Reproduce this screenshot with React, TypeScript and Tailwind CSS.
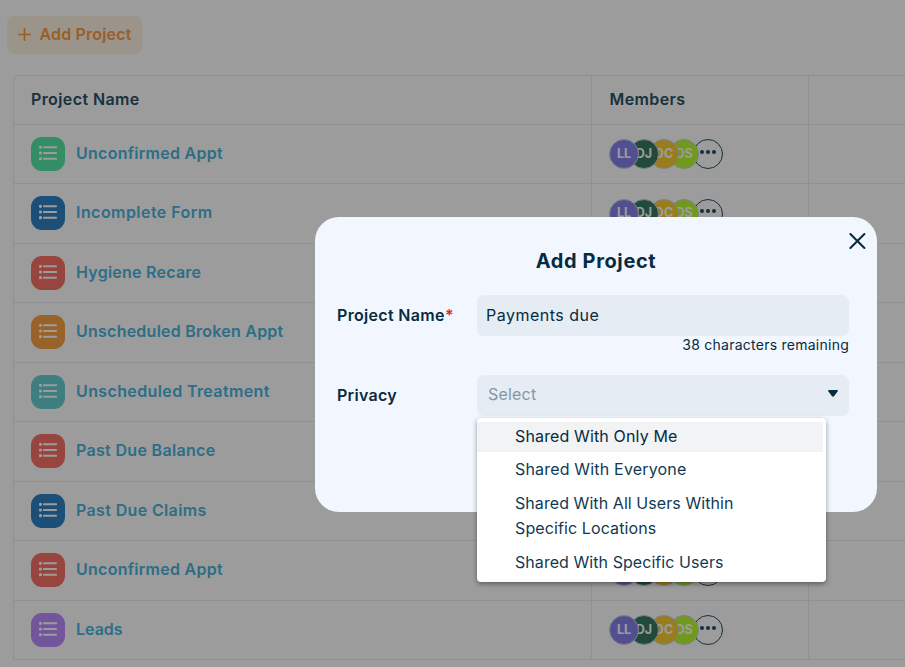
import { Fragment } from 'react';

type Project = { name: string; color: string; tracking: string };

const projects: Project[] = [
  { name: 'Unconfirmed Appt', color: 'bg-[#55e6a6]', tracking: 'tracking-[0.27px]' },
  { name: 'Incomplete Form', color: 'bg-[#2f81c5]', tracking: 'tracking-[0.45px]' },
  { name: 'Hygiene Recare', color: 'bg-[#fb7168]', tracking: 'tracking-[0.24px]' },
  { name: 'Unscheduled Broken Appt', color: 'bg-[#f8a044]', tracking: 'tracking-[0.24px]' },
  { name: 'Unscheduled Treatment', color: 'bg-[#68cfd1]', tracking: 'tracking-[0.38px]' },
  { name: 'Past Due Balance', color: 'bg-[#fb7168]', tracking: 'tracking-[0.32px]' },
  { name: 'Past Due Claims', color: 'bg-[#2f81c5]', tracking: 'tracking-[0.36px]' },
  { name: 'Unconfirmed Appt', color: 'bg-[#fb7168]', tracking: 'tracking-[0.27px]' },
  { name: 'Leads', color: 'bg-[#bd8bff]', tracking: 'tracking-[0px]' },
];

const members = [
  { initials: 'LL', style: 'z-40 bg-[#8782ee]' },
  { initials: 'DJ', style: 'z-30 bg-[#377a60]' },
  { initials: 'DC', style: 'z-20 bg-[#f8cb30]' },
  { initials: 'DS', style: 'z-10 bg-[#b8fa30]' },
];

function ListIcon() {
  return (
    <svg width="18" height="16" viewBox="0 0 18 16" fill="#fff" className="-mt-[2px]">
      {[2.3, 8, 13.7].map((y) => (
        <Fragment key={y}>
          <circle cx="1.5" cy={y} r="1.6" />
          <rect x="4" y={y - 1.05} width="14" height="2.1" rx="0.8" />
        </Fragment>
      ))}
    </svg>
  );
}

function Members() {
  return (
    <div className="isolate flex items-center">
      {members.map((m) => (
        <span
          key={m.initials}
          className={`relative -mr-[10px] flex size-[30px] items-center justify-center rounded-full border border-[#d0d2e0] text-[12.5px] font-bold text-white ${m.style}`}
        >
          {m.initials}
        </span>
      ))}
      <span className="ml-[4px] flex size-[30px] items-center justify-center gap-[2px] rounded-full border border-[#264c64] pb-[5px]">
        <i className="size-[4px] rounded-full bg-[#264c64]" />
        <i className="size-[4px] rounded-full bg-[#264c64]" />
        <i className="size-[4px] rounded-full bg-[#264c64]" />
      </span>
    </div>
  );
}

function ProjectTable() {
  return (
    <div className="ml-[13px] mt-[21px] w-[920px] rounded-tl-[6px] border-l border-t border-[#e8ebf3]">
      <div className="grid h-[48.600px] grid-cols-[578px_217px_1fr] border-b border-[#e8ebf3] font-semibold text-[#2b5066]">
        <div className="flex items-center border-r border-[#e8ebf3] pb-[1px] pl-[17px] tracking-[0.4px]">Project Name</div>
        <div className="flex items-center border-r border-[#e8ebf3] pb-[1px] pl-[17.500px] tracking-[0.38px]">Members</div>
        <div />
      </div>
      {projects.map((p, i) => (
        <div key={i} className="grid h-[59.5px] grid-cols-[578px_217px_1fr] border-b border-[#e8ebf3]">
          <div className="flex items-center gap-[11px] border-r border-[#e8ebf3] pl-[17px]">
            <span className={`flex size-[34px] items-center justify-center rounded-[11px] ${p.color}`}>
              <ListIcon />
            </span>
            <span className={`whitespace-nowrap pb-[2px] font-semibold text-[#4ab4dc] ${p.tracking}`}>{p.name}</span>
          </div>
          <div className="flex items-center border-r border-[#e8ebf3] pl-[17px] pt-[0.500px]">
            <Members />
          </div>
          <div />
        </div>
      ))}
    </div>
  );
}

function PrivacyMenu() {
  return (
    <ul className="absolute left-0 top-[43px] flex h-[164px] w-[349px] flex-col gap-[3.4px] rounded-[4px] bg-white pr-[3px] pt-[4px] leading-[25px] text-[#113a52] shadow-[0_2px_5px_rgba(0,0,0,0.4)]">
      <li className="bg-[#f2f3f5] pb-[3.500px] pl-[38px] pt-[1.500px] tracking-[0.14px] text-[#072b40]">Shared With Only Me</li>
      <li className="pb-[3.500px] pl-[38px] pt-[1.500px] tracking-[0.18px]">Shared With Everyone</li>
      <li className="py-[2.5px] pl-[38px]">
        <span className="block tracking-[0.07px]">Shared With All Users Within</span>
        <span className="block tracking-[0.11px]">Specific Locations</span>
      </li>
      <li className="py-[2.5px] pl-[38px] tracking-[0.06px]">Shared With Specific Users</li>
    </ul>
  );
}

function AddProjectDialog() {
  return (
    <div className="absolute left-[315px] top-[217px] h-[295px] w-[562px] rounded-[24px] bg-[#f2f7ff] pl-[22px] pr-[28px] text-[#072b40]">
      <button className="absolute right-[11px] top-[15px]" aria-label="Close">
        <svg width="18" height="18" viewBox="0 0 18 18" stroke="#072b40" strokeWidth="2.1" strokeLinecap="round">
          <path d="M2.400 2l14 14M16.400 2l-14 14" />
        </svg>
      </button>
      <h2 className="-mr-[6px] pt-[29px] text-center text-[20px] font-bold leading-[30px] tracking-[0.62px]">Add Project</h2>
      <div className="mt-[19px] flex items-center">
        <label className="w-[140px] pb-[1px] font-semibold tracking-[0.33px]">
          Project Name<span className="text-[#d92d2d]">*</span>
        </label>
        <div className="flex h-[41px] flex-1 items-center rounded-[7px] bg-[#e5ecf3] pb-[2px] pl-[9px] tracking-[0.5px]">Payments due</div>
      </div>
      <p className="-mt-[1px] text-right text-[14px] leading-[20px] tracking-[0.25px]">38 characters remaining</p>
      <div className="mt-[20px] flex items-center">
        <label className="w-[140px] pb-[2px] font-semibold tracking-[0.3px]">Privacy</label>
        <div className="relative flex h-[41px] flex-1 items-center justify-between rounded-[7px] bg-[#e5ecf3] pl-[11px] pr-[11px]">
          <span className="pb-[3px] tracking-[0.2px] text-[#8496a3]">Select</span>
          <svg width="10" height="7" viewBox="0 0 10 7" fill="#072b40" className="-mt-[4px]">
            <path d="M1 0h8c1 0 1.200.8.6 1.400L6 6.200c-.6.6-1.400.6-2 0L.4 1.400C-.2.8 0 0 1 0z" />
          </svg>
          <PrivacyMenu />
        </div>
      </div>
    </div>
  );
}

export default function App() {
  return (
    <div className="relative h-[667px] w-[905px] overflow-hidden bg-white font-['Inter',sans-serif] text-[16px]">
      <button className="ml-[7px] mt-[16px] flex h-[38px] w-[135px] items-center rounded-[7px] bg-[#fef2e4] pl-[11px] font-semibold text-[#f99b3e]">
        <svg width="13" height="13" viewBox="0 0 13 13" stroke="#f99b3e" strokeWidth="1.7" strokeLinecap="round" className="-mt-[2px] mr-[8.500px]">
          <path d="M6.500.5v12M.5 6.500h12" />
        </svg>
        <span className="whitespace-nowrap pb-[2px] tracking-[0.18px]">Add Project</span>
      </button>
      <ProjectTable />
      <div className="absolute inset-0 z-50 bg-black/39" />
      <div className="absolute inset-0 z-50">
        <AddProjectDialog />
      </div>
    </div>
  );
}
